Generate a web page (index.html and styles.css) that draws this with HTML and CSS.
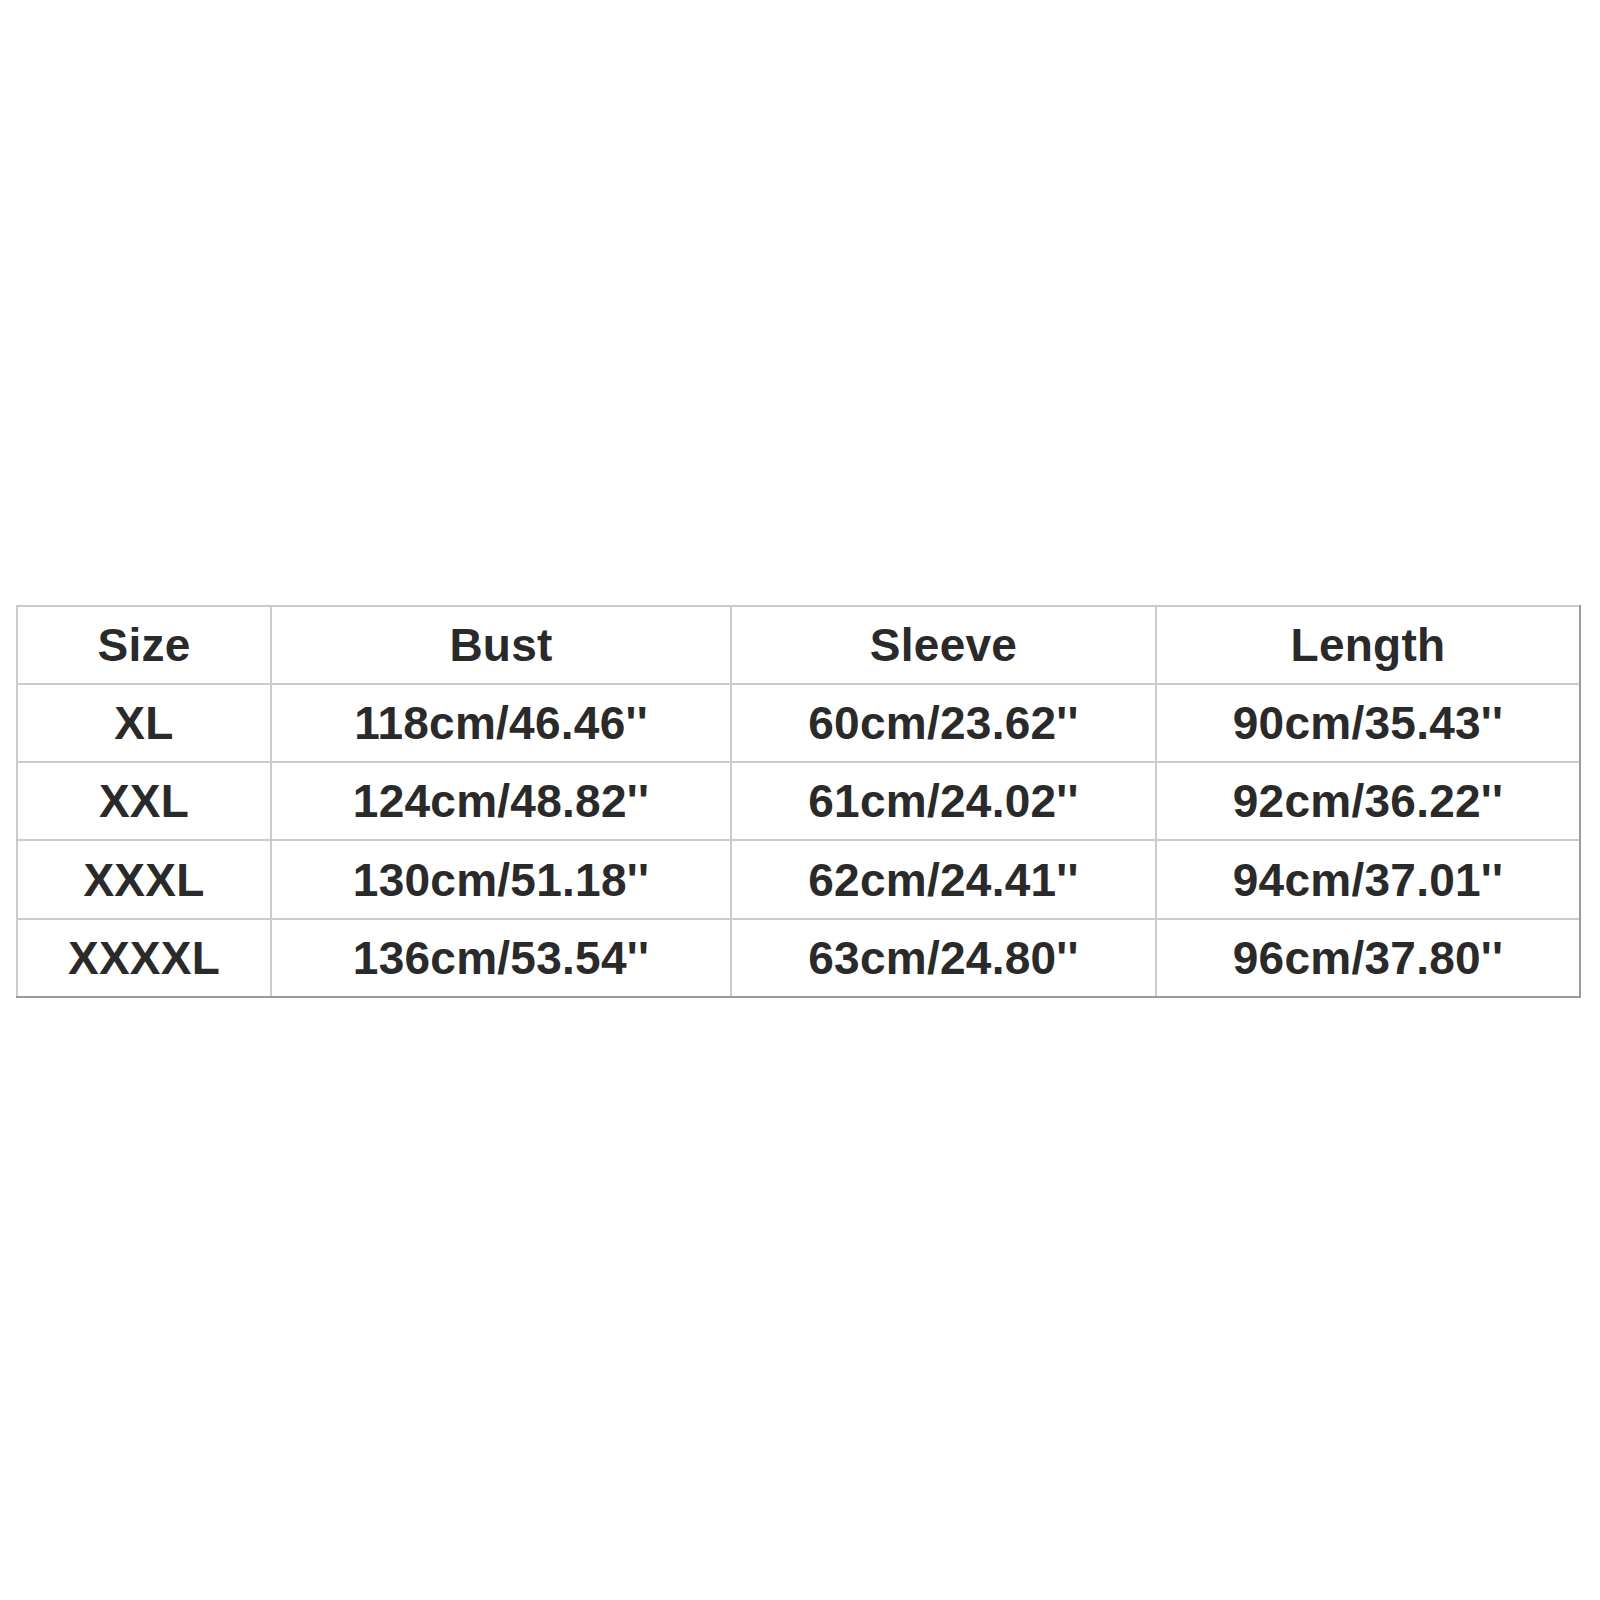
FILE: index.html
```html
<!DOCTYPE html>
<html>
<head>
<meta charset="utf-8">
<link rel="stylesheet" href="styles.css">
</head>
<body>
<div class="page">
  <div class="chart">
    <div class="cell">Size</div><div class="cell">Bust</div><div class="cell">Sleeve</div><div class="cell">Length</div>
    <div class="cell">XL</div><div class="cell">118cm/46.46''</div><div class="cell">60cm/23.62''</div><div class="cell">90cm/35.43''</div>
    <div class="cell">XXL</div><div class="cell">124cm/48.82''</div><div class="cell">61cm/24.02''</div><div class="cell">92cm/36.22''</div>
    <div class="cell">XXXL</div><div class="cell">130cm/51.18''</div><div class="cell">62cm/24.41''</div><div class="cell">94cm/37.01''</div>
    <div class="cell">XXXXL</div><div class="cell">136cm/53.54''</div><div class="cell">63cm/24.80''</div><div class="cell">96cm/37.80''</div>
  </div>
</div>
</body>
</html>
```
FILE: styles.css
```css
html, body {
  margin: 0;
  padding: 0;
  background: #ffffff;
}
.page {
  width: 1600px;
  height: 1600px;
  padding: 605px 0 0 16px;
  box-sizing: border-box;
}
.chart {
  display: grid;
  grid-template-columns: 252px 458px 423px 422px;
  grid-template-rows: 76px 76px 76px 77px 76px;
  gap: 2px;
  width: max-content;
  background: #cbcbcb;
  padding: 2px 0 0 2px;
  border-right: 2px solid #9a9a9a;
  border-bottom: 2px solid #9a9a9a;
}
.cell {
  background: #ffffff;
  display: flex;
  align-items: center;
  justify-content: center;
  font-family: "Liberation Sans", Arial, sans-serif;
  font-weight: bold;
  font-size: 46px;
  letter-spacing: 0.25px;
  color: #2a2a2a;
}
```
